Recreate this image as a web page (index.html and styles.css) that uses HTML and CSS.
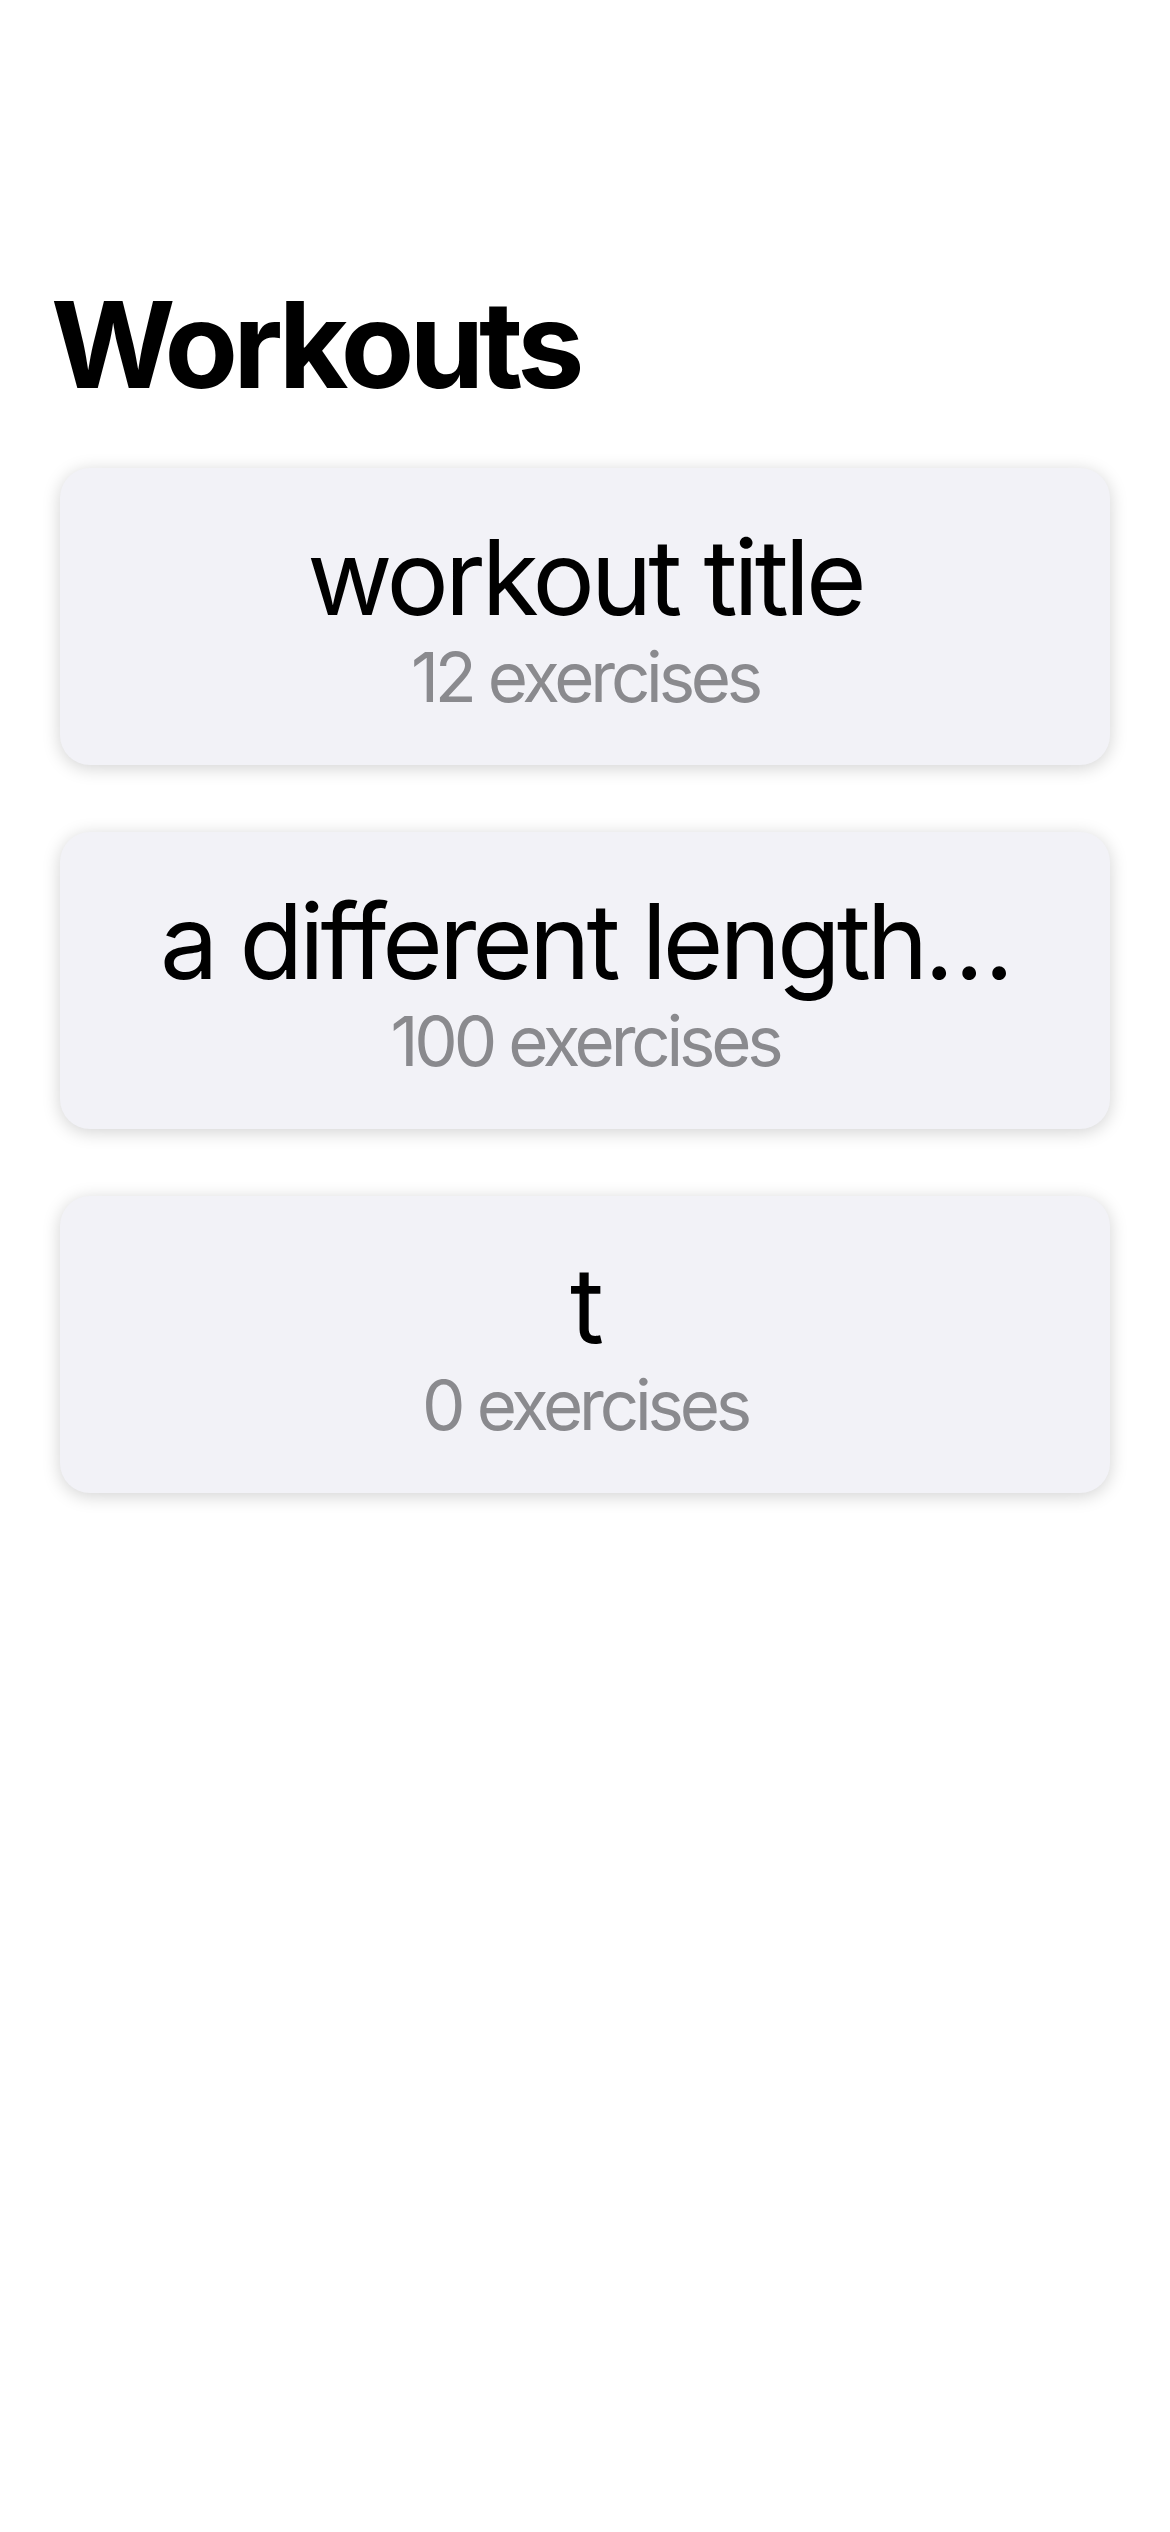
FILE: index.html
```html
<!DOCTYPE html>
<html lang="en">
<head>
<meta charset="utf-8">
<title>Workouts</title>
<link rel="stylesheet" href="styles.css">
</head>
<body>
<main class="screen">
  <h1 class="page-title">Workouts</h1>
  <ul class="workout-list">
    <li class="workout-card">
      <div class="workout-name">workout title</div>
      <div class="workout-count">12 exercises</div>
    </li>
    <li class="workout-card">
      <div class="workout-name">a different length…</div>
      <div class="workout-count">100 exercises</div>
    </li>
    <li class="workout-card">
      <div class="workout-name">t</div>
      <div class="workout-count">0 exercises</div>
    </li>
  </ul>
</main>
</body>
</html>
```

FILE: styles.css
```css
html, body {
  margin: 0;
  padding: 0;
  background: #ffffff;
}

body {
  font-family: Inter, "Noto Sans", "Liberation Sans", sans-serif;
  color: #000000;
}

.screen {
  width: 1170px;
  min-height: 2532px;
  box-sizing: border-box;
  padding-top: 273px;
}

.page-title {
  margin: 0 0 51px 0;
  padding-left: 51px;
  font-size: 120px;
  line-height: 144px;
  font-weight: 700;
  letter-spacing: -5px;
}

.workout-list {
  list-style: none;
  margin: 0;
  padding: 0 60px;
  display: flex;
  flex-direction: column;
  gap: 67px;
}

.workout-card {
  background: #f2f2f7;
  border-radius: 30px;
  box-shadow: 0 3px 18px rgba(0, 0, 0, 0.18);
  padding: 49px 40px 48px;
  display: flex;
  flex-direction: column;
  align-items: center;
  text-align: center;
}

.workout-name {
  font-size: 104px;
  line-height: 120px;
  font-weight: 400;
  letter-spacing: -4px;
  white-space: nowrap;
}

.workout-count {
  font-size: 69px;
  line-height: 80px;
  font-weight: 400;
  color: #8a8a8e;
  letter-spacing: -4.2px;
  white-space: nowrap;
}
```
